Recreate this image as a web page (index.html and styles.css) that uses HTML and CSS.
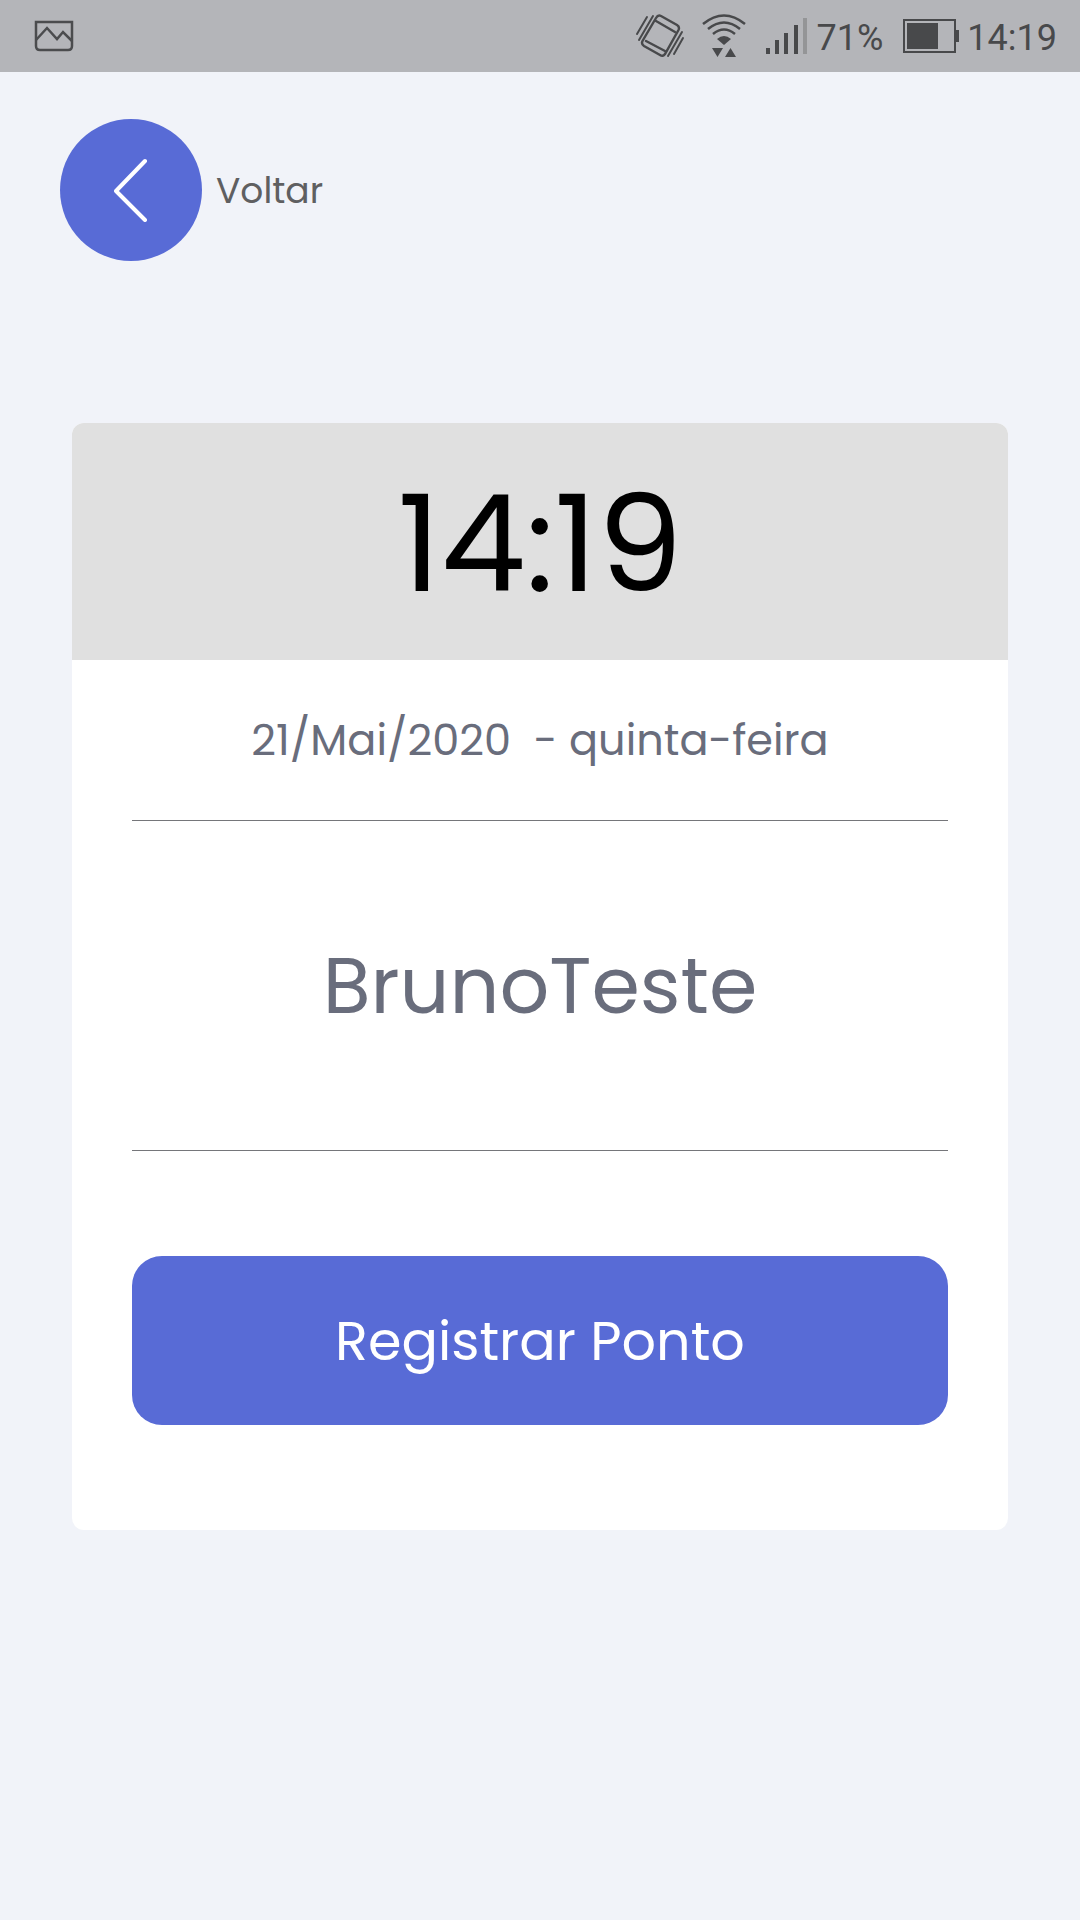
FILE: index.html
```html
<!DOCTYPE html>
<html lang="pt-BR">
<head>
    <meta charset="UTF-8">
    <meta name="viewport" content="width=device-width, initial-scale=1.0">
    <title>Registrar Ponto</title>
    <link rel="stylesheet" href="styles.css">
</head>
<body>
    <div class="status-bar">
        <svg class="icon-photo" width="40" height="32" viewBox="0 0 40 32" fill="none" stroke="#4b4c4e" stroke-width="2.500">
            <path d="M2 2H38V26Q38 30 34 30H6Q2 30 2 26Z"/>
            <path d="M2 20L13 8L23 19L29 12L38 21"/>
        </svg>
        <svg class="icon-vibrate" width="50" height="46" viewBox="0 0 50 46" fill="none" stroke="#48494b" stroke-width="2.400" stroke-linecap="round">
            <path d="M26 3L42 12Q45 14 43.500 17L30 41Q28 44 25 42L9 33Q6 31 7.500 28L21 5Q23 1.500 26 3Z"/>
            <path d="M21 8L40 19M11 28L30 38"/>
            <path d="M12 4L2 21M18 3L4 27M48 25L39 41M47 19L33 43" stroke-width="2"/>
        </svg>
        <svg class="icon-wifi" width="44" height="46" viewBox="0 0 44 46" fill="none" stroke="#48494b" stroke-width="2.500">
            <path d="M1 11Q22 -6 43 11M6 16Q22 3 38 16M11 21Q22 12 33 21"/>
            <path d="M15 26Q22 20 29 26L22 32Z" fill="#48494b" stroke="none"/>
            <path d="M10 35H21L15.500 44ZM23 44H34L28.500 35Z" fill="#48494b" stroke="none"/>
        </svg>
        <svg class="icon-signal" width="42" height="36" viewBox="0 0 42 36" fill="#48494b">
            <path d="M0 30H4V36H0ZM9 22H13V36H9ZM18 15H22V36H18ZM28 7H32V36H28Z"/>
            <path d="M37 0H41V36H37Z" fill="#949597"/>
        </svg>
        <span class="status-text">71%</span>
        <svg class="icon-battery" width="56" height="34" viewBox="0 0 56 34">
            <rect x="1" y="1" width="51" height="32" fill="none" stroke="#48494b" stroke-width="2"/>
            <path d="M4 4H35V30H4ZM52 11H56V23H52Z" fill="#48494b"/>
        </svg>
        <span class="status-text">14:19</span>
    </div>

    <button class="back" type="button">
        <span class="back-circle">
            <svg width="34" height="64" viewBox="0 0 34 64" fill="none" stroke="#fff" stroke-width="4" stroke-linecap="round" stroke-linejoin="round">
                <path d="M31 3L2 33L31 62"/>
            </svg>
        </span>
        Voltar
    </button>

    <main class="card">
        <div class="clock">14:19</div>
        <div class="content">
            <p class="date">21/Mai/2020 &nbsp;- quinta-feira</p>
            <p class="name">BrunoTeste</p>
            <button class="register" type="button">Registrar Ponto</button>
        </div>
    </main>
</body>
</html>
```

FILE: styles.css
```css
* {
    box-sizing: border-box;
}
body {
    margin: 0;
    min-height: 100vh;
    background: #f1f3f9;
    font-family: Poppins, Inter, sans-serif;
}
button {
    border: none;
    font-family: inherit;
    cursor: pointer;
}
.status-bar {
    display: flex;
    align-items: center;
    height: 72px;
    padding: 0 23px 0 34px;
    background: #b4b5b9;
    color: #48494b;
    font-family: Roboto, sans-serif;
    font-size: 36px;
}
.status-text {
    padding-top: 3px;
}
.icon-vibrate {
    margin-left: auto;
}
.icon-wifi {
    margin-left: 17px;
}
.icon-signal {
    margin: 0 9px 0 20px;
}
.icon-battery {
    margin: 0 8px 0 20px;
}
.back {
    display: flex;
    align-items: center;
    gap: 14px;
    margin: 47px 60px 0;
    padding: 0;
    background: none;
    color: #5f5f61;
    font-size: 36px;
}
.back-circle {
    display: flex;
    align-items: center;
    justify-content: center;
    width: 142px;
    height: 142px;
    border-radius: 50%;
    background: #586bd6;
}
.card {
    margin: 162px 72px 0;
    border-radius: 12px;
    overflow: hidden;
    background: #fff;
}
.clock {
    padding: 38px 0 34px;
    background: #e0e0e0;
    color: #000;
    font-size: 135px;
    line-height: 165px;
    text-align: center;
}
.content {
    padding: 0 60px 105px;
    color: #696d7c;
    text-align: center;
}
.date,
.name {
    margin: 0;
    border-bottom: 1px solid #75767a;
}
.date {
    font-size: 43px;
    line-height: 160px;
}
.name {
    font-size: 78px;
    line-height: 329px;
}
.register {
    width: 100%;
    margin-top: 105px;
    padding: 53px 0 51px;
    border-radius: 30px;
    background: #586bd6;
    color: #fff;
    font-size: 54px;
    line-height: 65px;
}
```
